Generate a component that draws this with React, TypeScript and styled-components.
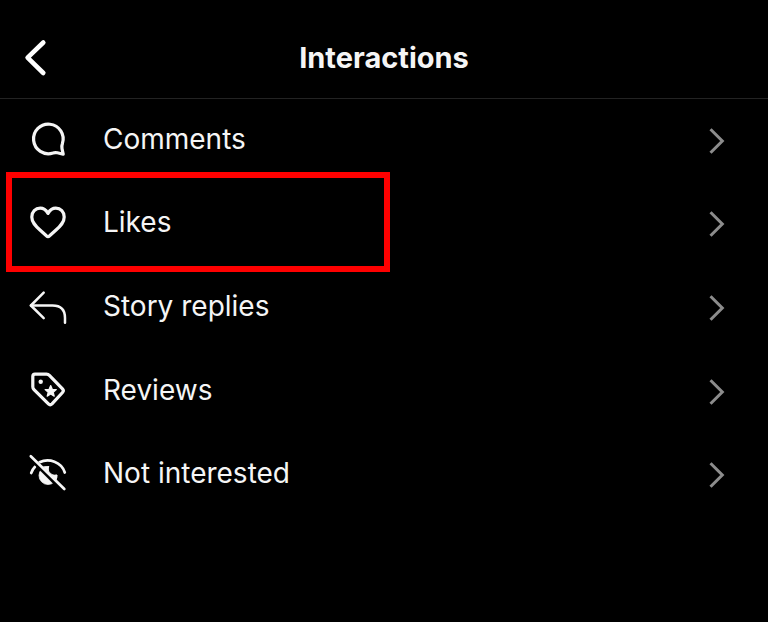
import React from "react";
import styled, { createGlobalStyle } from "styled-components";

const GlobalStyle = createGlobalStyle`
  html, body { margin: 0; background: #000; }
  *, *::before, *::after { box-sizing: border-box; }
  body { font-family: Inter, "Liberation Sans", sans-serif; color: #f5f5f5; }
`;

const Screen = styled.main`
  min-height: 100vh;
  background: #000;
`;

const Header = styled.header`
  display: grid;
  grid-template-columns: 24px 1fr 24px;
  align-items: center;
  padding: 38px 24px 20px;
  border-bottom: 1px solid #232323;
`;

const BackButton = styled.button`
  display: flex;
  padding: 0;
  border: 0;
  background: none;
  color: #fff;
  cursor: pointer;
`;

const Title = styled.h1`
  margin: 0;
  font-size: 29px;
  line-height: 40px;
  font-weight: 700;
  text-align: center;
`;

const List = styled.ul`
  display: grid;
  grid-auto-rows: 1fr;
  min-height: 418px;
  margin: 0;
  padding: 0;
  list-style: none;
`;

const Item = styled.li`
  position: relative;
  display: grid;
`;

const RowLink = styled.a`
  display: flex;
  align-items: center;
  justify-content: space-between;
  padding: 0 43px 0 28px;
  color: inherit;
  text-decoration: none;
`;

const Entry = styled.span`
  display: flex;
  align-items: center;
  gap: 35px;
  padding-bottom: 4px;
`;

const Label = styled.span`
  font-size: 28px;
  line-height: 40px;
`;

const Highlight = styled.span`
  position: absolute;
  inset: -11px auto -6px 6px;
  width: 50%;
  border: 6px solid #fe0000;
  pointer-events: none;
`;

const Icon = styled.svg`
  flex: none;
  fill: none;
  stroke: #f5f5f5;
  stroke-width: 3.2;
  stroke-linecap: round;
  stroke-linejoin: round;
`;

const Chevron = styled.svg`
  flex: none;
  fill: none;
  stroke: #8c8c8c;
  stroke-width: 3;
`;

const Cutout = styled.path`
  stroke: #000;
  stroke-width: 5;
  stroke-linecap: butt;
`;

function CommentIcon() {
  return (
    <Icon width="40" height="40" viewBox="0 0 40 40" aria-hidden="true">
      <path d="M35.2 35.2 34 29.6Q33.5 27 34.4 24.6A14.8 14.8 0 1 0 25 34Q27 33.2 29.4 33.8Z" />
    </Icon>
  );
}

function HeartIcon() {
  return (
    <Icon width="40" height="40" viewBox="0 0 40 40" aria-hidden="true">
      <path d="M20 11.4C18 8 15.5 6.2 12.2 6.2 7.4 6.2 3.8 10 3.8 15c0 5.5 3.7 9 8.2 13l6.4 5.8q1.6 1.6 3.2 0L28 28c4.5-4 8.2-7.5 8.2-13 0-5-3.6-8.8-8.4-8.8-3.3 0-5.8 1.8-7.8 5.2Z" />
    </Icon>
  );
}

function ReplyIcon() {
  return (
    <Icon width="40" height="40" viewBox="0 0 40 40" aria-hidden="true">
      <g strokeWidth="2.5">
        <path d="M15.7 6.7 2.9 19.5 15.7 32.2" />
        <path d="M2.9 19.5H24.5Q37 19.5 37 32V36.8" />
      </g>
    </Icon>
  );
}

function ReviewIcon() {
  return (
    <Icon width="40" height="40" viewBox="0 0 40 40" aria-hidden="true">
      <path d="M7 4.2H18.5Q20.2 4.2 21.4 5.4L34.5 18.9Q36.2 20.7 34.5 22.5L24 33.8Q22.2 35.6 20.4 33.8L6 19.6Q4.8 18.4 4.8 16.8V6.4Q4.8 4.2 7 4.2Z" />
      <circle cx="12.7" cy="11.7" r="2.2" fill="#f5f5f5" stroke="none" />
      <path
        d="M22.7 15.5 24.3 19.3 28.3 19.6 25.2 22.2 26.2 26.2 22.7 24.1 19.2 26.2 20.2 22.2 17.1 19.6 21.1 19.3Z"
        fill="#f5f5f5"
        strokeWidth="1.2"
      />
    </Icon>
  );
}

function HiddenIcon() {
  return (
    <Icon width="40" height="40" viewBox="0 0 40 40" aria-hidden="true">
      <g strokeWidth="2.7">
        <path d="M3.2 20Q4.5 16.3 7 13.8M11.5 9.3C21 4.8 33.5 9 36.8 19.5" />
        <path
          d="M20.5 13.5A9 9 0 1 0 29 22Q26 22.6 24 21.5 20 19 20.3 17 20 15.5 20.5 13.5Z"
          fill="#f5f5f5"
          strokeWidth="0.8"
        />
        <Cutout d="M-.8 1.2 38 40" />
        <path d="M2.8 3.2 36.3 36" />
        <path
          d="M15.8 13.6 20.6 13.8Q20 17 20.5 18.3ZM24.5 22.4Q26.500 22.600 29 22 29.200 25 28.200 26.500Z"
          fill="#f5f5f5"
          strokeWidth="0.6"
        />
      </g>
    </Icon>
  );
}

const rows = [
  { label: "Comments", icon: CommentIcon },
  { label: "Likes", icon: HeartIcon, highlighted: true },
  { label: "Story replies", icon: ReplyIcon },
  { label: "Reviews", icon: ReviewIcon },
  { label: "Not interested", icon: HiddenIcon },
];

export default function App() {
  return (
    <Screen>
      <GlobalStyle />
      <Header>
        <BackButton type="button" aria-label="Back">
          <svg
            width="24"
            height="40"
            viewBox="0 0 24 40"
            fill="none"
            stroke="currentColor"
            strokeWidth="4.6"
            strokeLinecap="round"
            strokeLinejoin="round"
            aria-hidden="true"
          >
            <path d="M19.3 4.5 3.6 19.7 19.3 35" />
          </svg>
        </BackButton>
        <Title>Interactions</Title>
      </Header>
      <List>
        {rows.map(({ label, icon: RowIcon, highlighted }) => (
          <Item key={label}>
            <RowLink href="#">
              <Entry>
                <RowIcon />
                <Label>{label}</Label>
              </Entry>
              <Chevron width="16" height="28" viewBox="0 0 16 28" aria-hidden="true">
                <path d="M1.5 2.2 13.3 14 1.5 25.8" />
              </Chevron>
            </RowLink>
            {highlighted && <Highlight />}
          </Item>
        ))}
      </List>
    </Screen>
  );
}
